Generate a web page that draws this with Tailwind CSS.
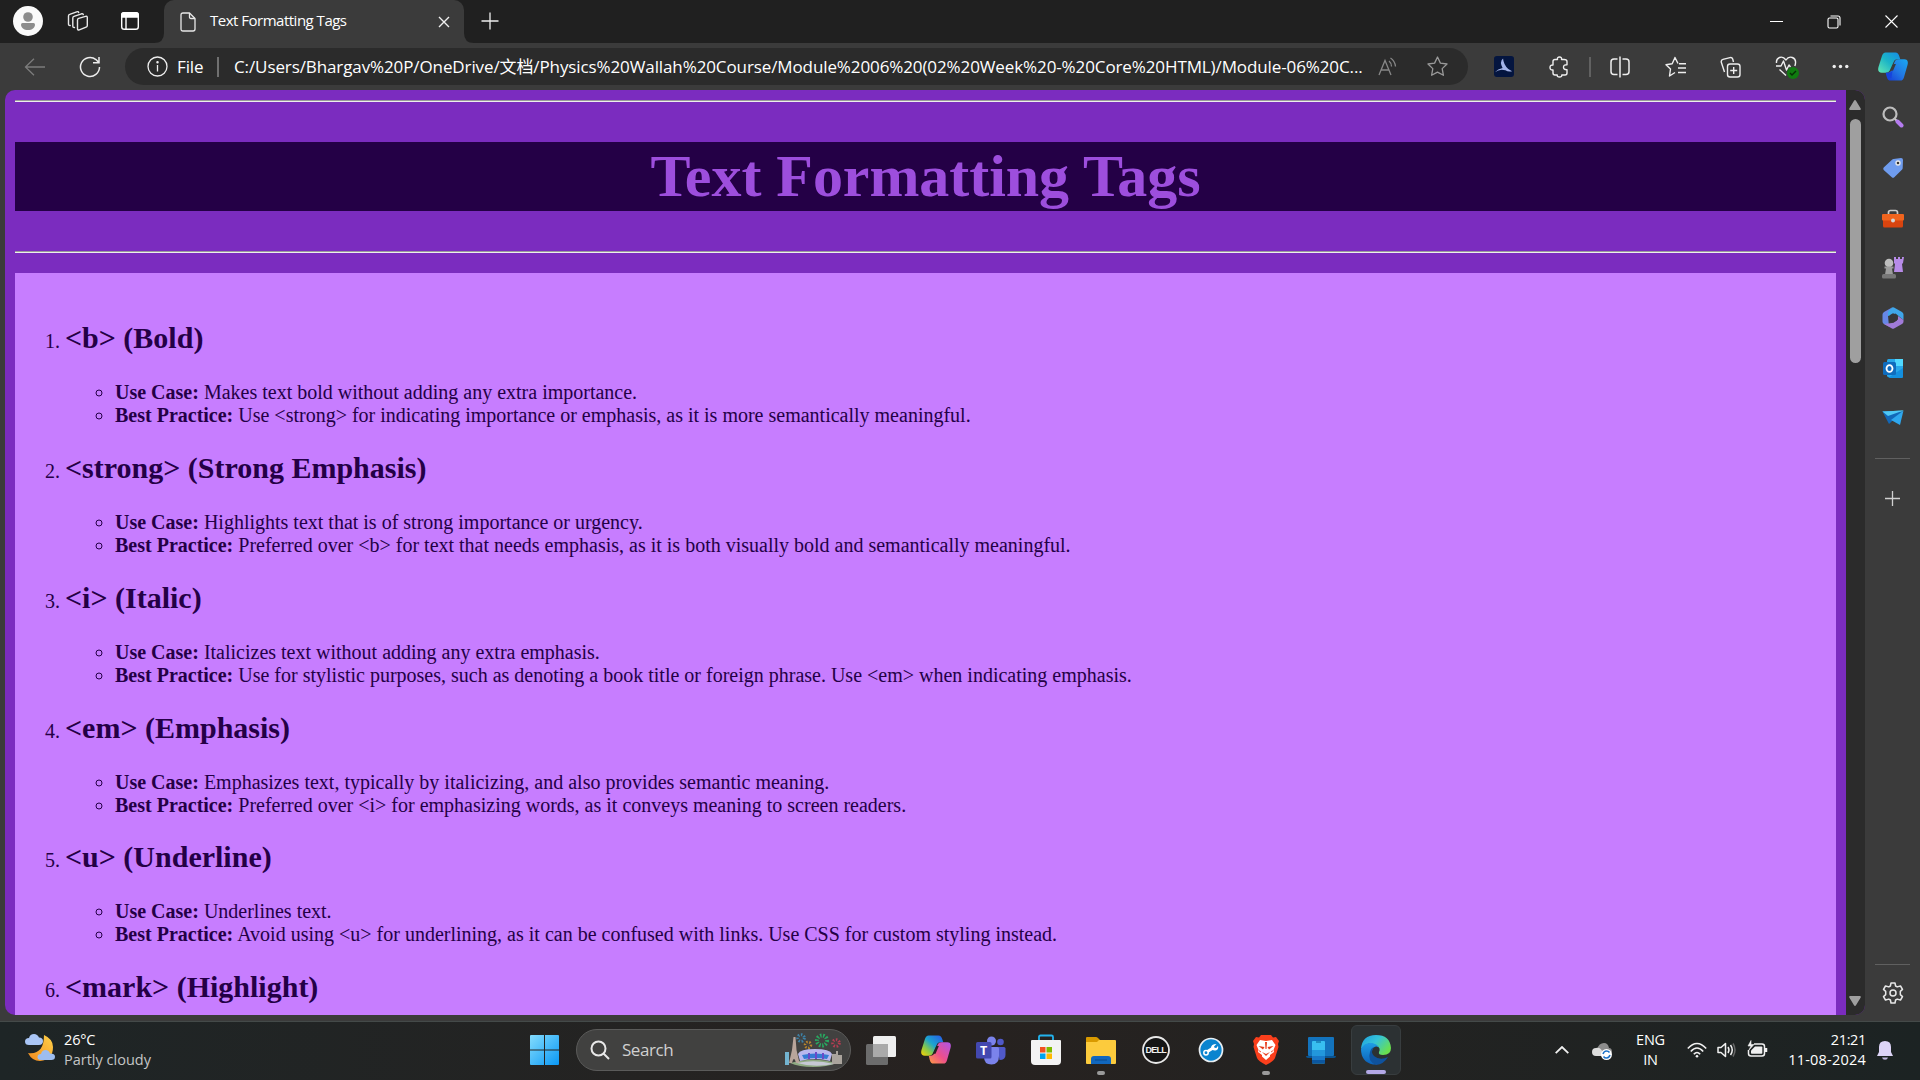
<!DOCTYPE html>
<html lang="en">
<head>
<meta charset="utf-8">
<title>Text Formatting Tags</title>
<script src="https://cdn.jsdelivr.net/npm/@tailwindcss/browser@4"></script>
</head>
<body class="w-[1920px] h-[1080px] overflow-hidden bg-[#3b3b3b] text-white font-['Open_Sans','Noto_Sans_CJK_SC',sans-serif] flex flex-col">

<!-- Tab strip -->
<header class="h-[43px] shrink-0 bg-[#202020] flex items-center">
  <svg class="ml-[13px] w-[30px] h-[30px] shrink-0 mb-[1px]" viewBox="0 0 30 30"><circle cx="15" cy="15" r="15" fill="#fafafa"/><circle cx="15" cy="11" r="4.8" fill="#8c8c8c"/><path d="M8 18.5q0-1.5 1.500-1.500h11q1.500 0 1.500 1.500c0 3.500-3 5.500-7 5.500s-7-2-7-5.500z" fill="#8c8c8c"/></svg>
  <svg class="ml-[24px] w-[22px] h-[22px] shrink-0 mb-px" viewBox="0 0 22 22" fill="none" stroke="#e8e8e8" stroke-width="1.400" stroke-linejoin="round" stroke-linecap="round"><path d="M10.500 10q0-1.200 1.200-1.600l6.800-2q1.800-.5 1.800 1.100v8q0 1.200-1.200 1.700l-6.800 2.700q-1.800.6-1.800-1.100z"/><path d="M7.500 17.500q-1.700.2-1.700-1.500V8q0-1.200 1.200-1.600l7.500-2.600q1.600-.4 1.800.8"/><path d="M3.200 15.500q-1.700.2-1.700-1.500V6q0-1.200 1.200-1.600l7-2.600q1.700-.5 2 .7"/></svg>
  <svg class="ml-[31px] w-[20px] h-[20px] shrink-0 mb-px" viewBox="0 0 20 20" fill="none" stroke="#fff" stroke-width="1.400"><rect x="1.700" y="1.700" width="16.600" height="16.600" rx="2.600"/><path d="M1.700 6V4.300q0-2.600 2.600-2.600h11.400q2.600 0 2.600 2.600V6z" fill="#fff"/><path d="M6 6v12"/></svg>
  <div class="relative ml-[24px] h-[43px] w-[300px] shrink-0 bg-[#3b3b3b] rounded-t-[10px] flex items-center">
    <svg class="absolute -left-[10px] bottom-0 w-[10px] h-[10px]" viewBox="0 0 10 10"><path d="M10 0v10H0Q10 10 10 0z" fill="#3b3b3b"/></svg>
    <svg class="absolute -right-[10px] bottom-0 w-[10px] h-[10px]" viewBox="0 0 10 10"><path d="M0 0v10h10Q0 10 0 0z" fill="#3b3b3b"/></svg>
    <svg class="ml-[16px] w-[16px] h-[20px] shrink-0" viewBox="0 0 16 20" fill="none" stroke="#e8e8e8" stroke-width="1.300" stroke-linejoin="round"><path d="M1 3q0-2 2-2h6.500L15 6.500V17q0 2-2 2H3q-2 0-2-2z"/><path d="M9.500 1v4q0 1.500 1.500 1.500h4"/></svg>
    <span class="ml-[14px] w-[228px] text-[15px] leading-5 tracking-[-0.5px] whitespace-nowrap mb-[4px]">Text Formatting Tags</span>
    <svg class="w-[12px] h-[12px] shrink-0" viewBox="0 0 12 12" stroke="#f0f0f0" stroke-width="1.400"><path d="M1 1l10 10M11 1L1 11"/></svg>
  </div>
  <svg class="ml-[17px] w-[18px] h-[18px] shrink-0 mb-[1px]" viewBox="0 0 18 18" stroke="#eee" stroke-width="1.300"><path d="M9 .5v17M.5 9h17"/></svg>
  <div class="ml-auto mr-[22px] flex items-center gap-[44px]">
    <svg class="w-[13px] h-[13px]" viewBox="0 0 13 13" stroke="#fff"><path d="M0 6.500h13"/></svg>
    <svg class="w-[14px] h-[14px]" viewBox="0 0 14 14" fill="none" stroke="#fff" stroke-width="1.100"><rect x="1" y="3" width="10" height="10" rx="1.500"/><path d="M3.500 1h7.500q2 0 2 2v7.500"/></svg>
    <svg class="w-[13px] h-[13px]" viewBox="0 0 13 13" stroke="#fff" stroke-width="1.100"><path d="M.5.5l12 12M12.500.5l-12 12"/></svg>
  </div>
</header>

<!-- Address bar -->
<div class="h-[47px] shrink-0 flex items-center">
  <svg class="ml-[24px] w-[21px] h-[18px] shrink-0" viewBox="0 0 21 18" fill="none" stroke="#7c7c7c" stroke-width="1.300"><path d="M21 9H1.500M10 .7L1.500 9l8.500 8.300"/></svg>
  <svg class="ml-[34px] w-[22px] h-[22px] shrink-0" viewBox="0 0 22 22" fill="none" stroke="#ececec" stroke-width="1.500"><path d="M20.500 11a9.500 9.500 0 1 1-3.500-7.400L19.800 6.500M20 1v5.700h-6"/></svg>
  <div class="ml-[24px] w-[1343px] h-[37px] shrink-0 rounded-full bg-[#2b2b2b] flex items-center whitespace-nowrap text-[17px] leading-6">
    <svg class="ml-[22px] w-[21px] h-[21px] shrink-0" viewBox="0 0 21 21" fill="none" stroke="#eee" stroke-width="1.300"><circle cx="10.500" cy="10.500" r="9.500"/><path d="M10.500 9v6.500"/><circle cx="10.500" cy="6.200" r=".6" fill="#eee"/></svg>
    <span class="ml-[9px] w-[40px] tracking-[-0.100px]">File</span>
    <span class="w-[2px] h-[20px] bg-[#707070]"></span>
    <span class="ml-[15px] w-[1144px] tracking-[-0.105px]">C:/Users/Bhargav%20P/OneDrive/文档/Physics%20Wallah%20Course/Module%2006%20(02%20Week%20-%20Core%20HTML)/Module-06%20C...</span>
    <svg class="w-[20px] h-[20px] shrink-0" viewBox="0 0 20 20" fill="none" stroke="#878787" stroke-width="1.300"><path d="M1 18L7 3.500l6 14.500M3 13h8M11 4q2.500 2 2.500 5.500M12.500 1q4.500 3 5 8.500"/></svg>
    <svg class="ml-[29px] w-[21px] h-[21px] shrink-0" viewBox="0 0 21 21" fill="none" stroke="#9a9a9a" stroke-width="1.300" stroke-linejoin="round"><path d="M10.500 1l2.900 6.100 6.600.9-4.800 4.600 1.200 6.700-5.900-3.200-5.900 3.200 1.200-6.700L1 8l6.600-.9z"/></svg>
  </div>
  <div class="ml-[26px] flex items-center">
    <svg class="w-[20px] h-[21px]" viewBox="0 0 21 22"><rect width="21" height="22" rx="3" fill="#04153f"/><path d="M1 17q3-3.500 8-4.500Q5.500 6 9.500 2.500 10 9 15 13.500l4 2.500q-4 1-7-1-6-2-11 2z" fill="#a3b3e8"/></svg>
    <svg class="ml-[35px] w-[22px] h-[22px]" viewBox="0 0 22 22" fill="none" stroke="#eee" stroke-width="1.400" stroke-linejoin="round"><path d="M4 5.500q0-2 2-2h2.500q-.5-2.500 2-2.500t2 2.500H15q3 0 3 2v3.200q-3.500-.2-3.500 2.500t3.500 2.500V17q0 2-2 2h-3.200q.2 2-2.300 2t-2.300-2H6q-2 0-2-2v-3Q1 14.200 1 11.500t3-2.500z"/></svg>
    <span class="ml-[18px] w-[2px] h-[20px] bg-[#616161]"></span>
    <svg class="ml-[19px] w-[20px] h-[22px]" viewBox="0 0 20 22" fill="none" stroke="#eee" stroke-width="1.500"><path d="M7.500 3H4Q1 3 1 6v9.500q0 3 3 3h3.500M12.500 3H16q3 0 3 3v9.500q0 3-3 3h-3.500M10 .5v21"/></svg>
    <svg class="ml-[35px] w-[21px] h-[22px]" viewBox="0 0 21 22" fill="none" stroke="#eee" stroke-width="1.400" stroke-linejoin="round"><path d="M13 7.500l-3-6-2.800 6.200L1 8.700 5.500 13l-1 7 5.500-3.500M14 7.700h7M13 12h8M13 16.500h8"/></svg>
    <svg class="ml-[34px] w-[21px] h-[22px]" viewBox="0 0 21 22" fill="none" stroke="#eee" stroke-width="1.400"><rect x="7.500" y="8" width="12.500" height="13" rx="2.500"/><path d="M13.700 11v7M10.200 14.500h7M4.500 16L1.300 6.300q-.5-2.300 1.700-3l7-1.700q2-.5 2.700 1.400L13.500 6"/></svg>
    <svg class="ml-[34px] w-[24px] h-[24px]" viewBox="0 0 24 24" fill="none" stroke="#eee" stroke-width="1.400" stroke-linejoin="round"><path d="M1.500 8Q1 4 4.500 2.500T11 5q2.500-4 6.300-2.500T20.500 8q0 1.500-.7 3M1 11h5l2.500-5 3 9 2.500-5 1.500 2M4.500 14.500l6.500 6"/><circle cx="18" cy="18" r="6" fill="#107c10" stroke="none"/><path d="M15 18l2 2 4-4" stroke="#062f06"/></svg>
    <svg class="ml-[33px] w-[17px] h-[5px]" viewBox="0 0 17 5" fill="#eee"><circle cx="2.200" cy="2.500" r="1.700"/><circle cx="8.500" cy="2.500" r="1.700"/><circle cx="14.800" cy="2.500" r="1.700"/></svg>
    <svg class="ml-[29px] w-[30px] h-[29px]" viewBox="0 0 31 29"><defs><linearGradient id="ca" x1="0" y1="1" x2="1" y2="0"><stop stop-color="#65e7b4"/><stop offset=".5" stop-color="#1bb4c7"/><stop offset="1" stop-color="#168be8"/></linearGradient><linearGradient id="cb" x1="0" y1="1" x2="1" y2="0"><stop stop-color="#1437d6"/><stop offset=".5" stop-color="#2279e4"/><stop offset="1" stop-color="#19a9f2"/></linearGradient></defs><path d="M8 0h10q3 0 4 4l1 3h-3q-3 0-4 3l-4 9q-1 2-4 2H4q-5 0-3.500-6L4 4Q5 0 8 0z" fill="url(#ca)"/><path d="M23 29H13q-3 0-4-4l-1-4q5 0 6-3l3-8q1-3 4-3h6q5 0 3.500 6L27 25q-1 4-4 4z" fill="url(#cb)"/><path d="M16 12l-3 7h2.500l3-7z" fill="#3b3b3b"/><path d="M8 21h2q4 0 5-3l-1 8q-4 2-6-5z" fill="#1744dd"/></svg>
  </div>
</div>

<!-- Page, scrollbar and sidebar -->
<div class="h-[931px] shrink-0 flex pl-[5px]">
  <main class="w-[1860px] h-[925px] shrink-0 rounded-[10px] overflow-hidden bg-[#7b2cbf] flex">
    <div class="w-[1841px] h-full px-[10px] pt-[10px] overflow-hidden font-['Liberation_Serif',serif] text-[#240046] text-[20px] leading-[23px]">
      <hr class="h-[2px] border-0 border-t border-t-[#9a9a9a] bg-[#eeeeee]">
      <h1 class="my-[40px] h-[69px] bg-[#240046] text-[#9d4edd] text-center text-[60px] leading-[69px] tracking-[-0.05px] font-bold">Text Formatting Tags</h1>
      <hr class="h-[2px] border-0 border-t border-t-[#9a9a9a] bg-[#eeeeee]">
      <ol class="mt-[20px] pt-[48px] pb-[50px] pl-[50px] bg-[#c77dff] list-decimal">
        <li class="mb-[24px]"><h2 class="text-[30px] leading-[34px] font-bold">&lt;b&gt; (Bold)</h2>
          <ul class="mt-[26px] pl-[50px] list-[circle]"><li><b>Use Case:</b> Makes text bold without adding any extra importance.</li><li><b>Best Practice:</b> Use &lt;strong&gt; for indicating importance or emphasis, as it is more semantically meaningful.</li></ul></li>
        <li class="mb-[24px]"><h2 class="text-[30px] leading-[34px] font-bold">&lt;strong&gt; (Strong Emphasis)</h2>
          <ul class="mt-[26px] pl-[50px] list-[circle]"><li><b>Use Case:</b> Highlights text that is of strong importance or urgency.</li><li><b>Best Practice:</b> Preferred over &lt;b&gt; for text that needs emphasis, as it is both visually bold and semantically meaningful.</li></ul></li>
        <li class="mb-[24px]"><h2 class="text-[30px] leading-[34px] font-bold">&lt;i&gt; (Italic)</h2>
          <ul class="mt-[26px] pl-[50px] list-[circle]"><li><b>Use Case:</b> Italicizes text without adding any extra emphasis.</li><li><b>Best Practice:</b> Use for stylistic purposes, such as denoting a book title or foreign phrase. Use &lt;em&gt; when indicating emphasis.</li></ul></li>
        <li class="mb-[23px]"><h2 class="text-[30px] leading-[34px] font-bold">&lt;em&gt; (Emphasis)</h2>
          <ul class="mt-[26px] pl-[50px] list-[circle]"><li><b>Use Case:</b> Emphasizes text, typically by italicizing, and also provides semantic meaning.</li><li><b>Best Practice:</b> Preferred over &lt;i&gt; for emphasizing words, as it conveys meaning to screen readers.</li></ul></li>
        <li class="mb-[24px]"><h2 class="text-[30px] leading-[34px] font-bold">&lt;u&gt; (Underline)</h2>
          <ul class="mt-[26px] pl-[50px] list-[circle]"><li><b>Use Case:</b> Underlines text.</li><li><b>Best Practice:</b> Avoid using &lt;u&gt; for underlining, as it can be confused with links. Use CSS for custom styling instead.</li></ul></li>
        <li><h2 class="text-[30px] leading-[34px] font-bold">&lt;mark&gt; (Highlight)</h2></li>
      </ol>
    </div>
    <div class="w-[19px] h-full bg-[#2b2b2b] flex flex-col items-center pr-px">
      <svg class="mt-[10px] w-[12px] h-[10px]" viewBox="0 0 12 10" fill="#9f9f9f"><path d="M6 0q.6 0 1 .7l4.700 7.800q.6 1.500-1 1.500H1.300q-1.600 0-1-1.500L5 .7Q5.400 0 6 0z"/></svg>
      <div class="mt-[9px] w-[11px] h-[244px] rounded-full bg-[#9f9f9f]"></div>
      <svg class="mt-auto mb-[9px] w-[12px] h-[10px] rotate-180" viewBox="0 0 12 10" fill="#9f9f9f"><path d="M6 0q.6 0 1 .7l4.700 7.800q.6 1.500-1 1.500H1.300q-1.600 0-1-1.500L5 .7Q5.400 0 6 0z"/></svg>
    </div>
  </main>

  <aside class="flex-1 flex flex-col items-center pt-[16px]">
    <svg class="w-[22px] h-[22px]" viewBox="0 0 22 22" fill="none"><circle cx="8" cy="8" r="6.500" stroke="#bdbdbd" stroke-width="2.200"/><path d="M13 13l2.500 2.500" stroke="#ccc" stroke-width="2"/><path d="M15.500 15.500l4 4" stroke="#b57cf0" stroke-width="4" stroke-linecap="round"/></svg>
    <svg class="mt-[29px] w-[22px] h-[22px]" viewBox="0 0 22 22"><path d="M11.500 2L19 1q2 0 2 2l-.3 8q0 1-.8 1.700l-7.600 7.600q-1.300 1-2.500 0L1.700 13q-1-1.200 0-2.500L10 2.700q.7-.6 1.500-.7z" fill="#6f9cee"/><circle cx="16" cy="6" r="2" fill="#333" stroke="#e8e8e8" stroke-width="1.400"/></svg>
    <svg class="mt-[30px] w-[22px] h-[20px]" viewBox="0 0 22 20"><path d="M6.500 5V3.500q0-2 2-2h5q2 0 2 2V5" fill="none" stroke="#ccc" stroke-width="1.700"/><path d="M1 10h20v7q0 1.500-1.500 1.500h-17Q1 18.500 1 17z" fill="#d9440f"/><rect y="5" width="22" height="6.500" rx="1" fill="#f0641e"/><circle cx="11" cy="11.500" r="2" fill="#d6d6d6"/></svg>
    <svg class="mt-[27px] w-[22px] h-[23px]" viewBox="0 0 22 23"><path d="M12 1h2v2h2V1h2v2h2V1h2l-1 6-1 1 1 8h-9l1-8-1-1z" fill="#b78be8"/><circle cx="7" cy="7" r="4.300" fill="#bdbdbd"/><path d="M2.500 10.500h9v2H10l1 6H3l1-6H2.500z" fill="#9c9c9c"/><rect y="18" width="14" height="4.500" rx="1.500" fill="#777"/></svg>
    <svg class="mt-[28px] w-[22px] h-[22px]" viewBox="0 0 22 22"><path d="M10 .5L2 5Q.5 6 .5 7.500v7Q.5 16 2 17l5 2.500L6 9z" fill="#6687e6"/><path d="M10 .5q1-.6 2 0l8 4.500q1.500 1 1.500 2.500V13l-8-6.500L6 9V5z" fill="#3fa6ea"/><path d="M21.500 13v1.500q0 1.500-1.500 2.500l-8 4.500q-1 .5-2 0l-8-4.500 8-1 6-3.500V9z" fill="#a17bd9"/><path d="M8 8l3-1.700L15 8v5.500L11 16l-4-2z" fill="#36363a"/></svg>
    <svg class="mt-[28px] w-[22px] h-[22px]" viewBox="0 0 22 22"><rect x="5" y="2" width="16" height="18" rx="1.500" fill="#28a8ea"/><path d="M13 2h8v7h-8z" fill="#50d9ff"/><path d="M21 11v9q0 1-1 1H6z" fill="#1490df"/><rect x="1" y="5" width="13" height="13" rx="1.500" fill="#0f6cbd"/><ellipse cx="7.500" cy="11.500" rx="3" ry="3.400" fill="none" stroke="#fff" stroke-width="1.800"/></svg>
    <svg class="mt-[31px] w-[22px] h-[17px]" viewBox="0 0 22 17"><path d="M.5 1.500L21.500.5 7 9z" fill="#45cafa"/><path d="M.5 1.500L20 1.500 7 14z" fill="#1268b8"/><path d="M21.500.5L18 15l-9-5z" fill="#2ea7ee"/><path d="M.5 1.500L21.500.5 6 6z" fill="#4fc9f5"/></svg>
    <span class="mt-[31px] w-[35px] h-px bg-[#606060]"></span>
    <svg class="mt-[32px] w-[15px] h-[15px]" viewBox="0 0 15 15" stroke="#d0d0d0" stroke-width="1.300"><path d="M7.500 0v15M0 7.500h15"/></svg>
    <span class="mt-auto w-[35px] h-px bg-[#606060]"></span>
    <svg class="mt-[17px] mb-[17px] w-[22px] h-[22px]" viewBox="0 0 22 22" fill="none" stroke="#e8e8e8" stroke-width="1.500" stroke-linejoin="round"><circle cx="11" cy="11" r="3"/><path d="M9 1h4l.6 3 1.600.9L18.500 4l2 3.400-2.200 2v3.200l2.200 2-2 3.400-3.300-.9-1.600.9L13 21H9l-.6-3-1.600-.9-3.300.9-2-3.400 2.200-2V9.400l-2.200-2 2-3.400 3.300.9L8.400 4z"/></svg>
  </aside>
</div>

<!-- Taskbar -->
<footer class="h-[59px] shrink-0 flex items-center pb-[2px] bg-linear-to-r from-[#1e2526] via-[#272220] to-[#1c2323] border-t border-[#444a49]">
  <svg class="ml-[25px] w-[30px] h-[30px] shrink-0 mb-[4px]" viewBox="0 0 30 30"><defs><linearGradient id="moon" x1="1" y1="0" x2="0" y2="1"><stop stop-color="#ffd24a"/><stop offset="1" stop-color="#f28a1e"/></linearGradient></defs><path d="M19 2q9 4 9 12 0 13-13 14Q7 28 3 20q16 2 16-18z" fill="url(#moon)"/><path d="M4 12q-4 0-4-3.500T4 5q1-4 5-4 3.500 0 5 3.500 4 0 4 3.700T14 12z" fill="#a9c5f5"/><path d="M16 27q-3.500 0-3.500-3t3.500-3q1-4 4.500-4t4.500 3.500q5 0 5 3.300T26 27z" fill="#9dbdf0"/></svg>
  <div class="ml-[9px] w-[466px] text-[14.500px] leading-[20px] mb-[1px]"><div class="tracking-[-0.150px]">26°C</div><div class="text-[#c4c6c6]">Partly cloudy</div></div>
  <svg class="w-[29px] h-[30px] shrink-0" viewBox="0 0 29 30"><defs><linearGradient id="win" x1="0" y1="0" x2="1" y2="1"><stop stop-color="#84dcfd"/><stop offset="1" stop-color="#0a98f5"/></linearGradient></defs><path d="M1 0h13v14.500H0V1q0-1 1-1zM15 0h13q1 0 1 1v13.500H15zM0 15.500h14V30H1q-1 0-1-1zM15 15.500h14V29q0 1-1 1H15z" fill="url(#win)"/></svg>
  <div class="ml-[17px] w-[275px] h-[42px] shrink-0 rounded-full bg-[#414140] border border-[#5b5b5a] flex items-center">
    <svg class="ml-[13px] w-[20px] h-[20px]" viewBox="0 0 20 20" fill="none" stroke="#e8e8e8" stroke-width="2"><circle cx="8.500" cy="8.500" r="7"/><path d="M13.500 13.500l5.500 5.500"/></svg>
    <span class="ml-[12px] w-[163px] text-[17px] leading-6 tracking-[-0.450px] text-[#d0d0d0]">Search</span>
    <svg class="w-[57px] h-[36px]" viewBox="0 0 57 36"><g fill="none" stroke-dasharray="1.500 1.500"><circle cx="16" cy="6" r="3.300" stroke="#3d82a8" stroke-width="3"/><circle cx="37" cy="8.500" r="5" stroke="#28a860" stroke-width="4"/><circle cx="23" cy="13" r="3" stroke="#b8862d" stroke-width="2.500"/><circle cx="51" cy="11" r="3.300" stroke="#b33d52" stroke-width="3"/></g><path d="M5 31q23-7 47 0-10 4-24 4T5 31z" fill="#8faa83"/><path d="M8.500 5h2l1 13 3 13H11q-1-4-2-4t-2 4H4l3-13z" fill="#b9a59b"/><path d="M0 20h4v13H0z" fill="#73b4d0"/><path d="M47 22h4v-3h2v4h4v9H47z" fill="#aaa49d"/><path d="M13 22q2-5 17-5t17 5l-2 7q-15-4-30 0z" fill="#b9b7ed"/><path d="M17 23q13-3 27 0l-2 4q-11-2-23 0z" fill="#347bd3"/><path d="M24 21v6M31 20v7M38 21v6" stroke="#6b49c8" stroke-width="2"/><path d="M12 31q18-4 37 1-20 4-37-1z" fill="#c6c8d5"/></svg>
  </div>
  <div class="ml-[2px] h-full flex items-center">
    <div class="w-[55px] flex justify-center"><svg class="w-[30px] h-[29px]" viewBox="0 0 30 29"><rect x="7" width="23" height="21" rx="1.500" fill="#efefef"/><rect y="8" width="22" height="21" rx="1.500" fill="#6c6c6c"/><path d="M7 8h15v13H7z" fill="#aaa"/></svg></div>
    <div class="w-[55px] flex justify-center"><svg class="w-[30px] h-[29px] mb-px" viewBox="0 0 31 29"><defs><linearGradient id="cp" x1="1" y1="0" x2="0" y2="1"><stop stop-color="#2857ea"/><stop offset=".45" stop-color="#1ca4d0"/><stop offset=".7" stop-color="#86c84b"/><stop offset="1" stop-color="#ffd000"/></linearGradient><linearGradient id="cq" x1="1" y1="0" x2="0" y2="1"><stop stop-color="#ae55e8"/><stop offset=".55" stop-color="#ed4f8c"/><stop offset="1" stop-color="#ff9b41"/></linearGradient></defs><path d="M8 0h10q3 0 4 4l1 3h-3q-3 0-4 3l-4 9q-1 2-4 2H4q-5 0-3.500-6L4 4Q5 0 8 0z" fill="url(#cp)"/><path d="M23 29H13q-3 0-4-4l-1-4q5 0 6-3l3-8q1-3 4-3h6q5 0 3.500 6L27 25q-1 4-4 4z" fill="url(#cq)"/><path d="M16 11l-3.500 8h2.500l3.500-8z" fill="#252322"/></svg></div>
    <div class="w-[55px] flex justify-center"><svg class="w-[30px] h-[29px]" viewBox="0 0 30 29"><circle cx="15.500" cy="5" r="4.500" fill="#7b83eb"/><circle cx="24.500" cy="6" r="3.300" fill="#5059c9"/><path d="M21 11h7q1.500 0 1.500 1.500V19q0 5-6 5z" fill="#5059c9"/><path d="M9 11h12.500q1.500 0 1.500 1.500V20q0 8.500-7.500 8.500T8 21z" fill="#7b83eb"/><rect y="6" width="15.500" height="16.500" rx="1.500" fill="#4348b0"/><text x="7.700" y="19" text-anchor="middle" font-size="12.500" font-weight="700" fill="#fff">T</text></svg></div>
    <div class="w-[55px] flex justify-center"><svg class="w-[30px] h-[32px]" viewBox="0 0 30 32"><path d="M8 7V3q0-1.500 1.500-1.500h11Q22 1.500 22 3v4" fill="none" stroke="#22b3ee" stroke-width="1.800"/><path d="M1 6h28q1 0 1 1v20q0 4-4 4H4q-4 0-4-4V7q0-1 1-1z" fill="#f3f3f3"/><path d="M9 13h5.500v5.500H9z" fill="#f25022"/><path d="M15.500 13H21v5.500h-5.500z" fill="#7fba00"/><path d="M9 19.500h5.500V25H9z" fill="#00a4ef"/><path d="M15.500 19.500H21V25h-5.500z" fill="#ffb900"/></svg></div>
    <div class="relative w-[55px] h-full flex items-center justify-center"><svg class="w-[30px] h-[27px]" viewBox="0 0 30 27"><path d="M0 1q0-1 1-1h9q1 0 2 1l2 2v5H0z" fill="#d99a00"/><path d="M0 5h11l2-2h16q1 0 1 1v22q0 1-1 1H1q-1 0-1-1z" fill="#fccb3d"/><path d="M5 27v-5q0-3 3-3h14q3 0 3 3v5z" fill="#1167be"/><path d="M9 23h12" stroke="#0a4a8b"/></svg><span class="absolute bottom-[3px] w-[8px] h-[4px] rounded-full bg-[#9a9a9a]"></span></div>
    <div class="w-[55px] flex justify-center"><svg class="w-[28px] h-[28px]" viewBox="0 0 28 28"><circle cx="14" cy="14" r="13" fill="#151515" stroke="#e8e8e8" stroke-width="1.800"/><text x="13.700" y="17.300" text-anchor="middle" font-size="9" font-weight="700" letter-spacing="-.8" fill="#f0f0f0" font-family="Liberation Sans">DELL</text></svg></div>
    <div class="w-[55px] flex justify-center"><svg class="w-[26px] h-[26px]" viewBox="0 0 26 26"><circle cx="13" cy="13" r="11.500" fill="#0a84cf" stroke="#e8eef2" stroke-width="1.700"/><path d="M9.500 14.500L15 11" stroke="#fff" stroke-width="2.800"/><circle cx="8" cy="15.700" r="2.200" fill="none" stroke="#fff" stroke-width="1.500"/><path d="M18.500 7l-2.500 2.500.8 1.400 1.900-.2 1.300-2q1 4-2.500 4.800-3.500.4-4.500-2.500Q13 7 18.500 7z" fill="#fff"/></svg></div>
    <div class="relative w-[55px] h-full flex items-center justify-center"><svg class="w-[26px] h-[30px]" viewBox="0 0 26 30"><path d="M8 0h10l2 2.500 3-.5 3 4-1 3 .5 3L22 23q-1 3-9 7-8-4-9-7L.5 12 1 9 0 6l3-4 3 .5z" fill="#fa3f1c"/><path d="M7 5l6 1 6-1 3.500 5-2 5 .5 2-4 3v1.500L13 25l-4-3.500V20l-4-3 .5-2-2-5z" fill="#fff"/><path d="M5.500 11l6 1-1.500 2.500zM20.500 11l-6 1 1.500 2.500zM12 7h2l-.5 7h-1zM9 17l4 2 4-2-4 4zM6 15l2 1.500-1 1zM20 15l-2 1.500 1 1z" fill="#e63b1b"/></svg><span class="absolute bottom-[3px] w-[8px] h-[4px] rounded-full bg-[#9a9a9a]"></span></div>
    <div class="w-[55px] flex justify-center"><svg class="w-[30px] h-[27px]" viewBox="0 0 30 27"><rect x="2" width="26" height="19" rx="1" fill="#1373bd"/><path d="M0 19h30q0 2-2 2H2q-2 0-2-2z" fill="#095390"/><rect x="6" y="4" width="13" height="22.500" rx="1" fill="#38bff0"/><path d="M6 13h13v6H6z" fill="#2297dc"/><path d="M6 19h13v4H6z" fill="#1878c8"/><path d="M6 23h13v3.500H6z" fill="#0b569f"/><path d="M10 5h5" stroke="#075c93"/></svg></div>
    <div class="relative ml-[3px] w-[50px] h-[50px] rounded-md bg-[#2c3133] border border-[#383d3f] flex items-center justify-center"><svg class="w-[30px] h-[30px]" viewBox="0 0 30 30"><defs><linearGradient id="eg" x1="0" y1="0" x2="1" y2=".6"><stop stop-color="#1c9fe0"/><stop offset=".5" stop-color="#35c3d8"/><stop offset="1" stop-color="#69e04f"/></linearGradient><linearGradient id="eb" x1="0" y1="0" x2="0" y2="1"><stop stop-color="#1f9de5"/><stop offset="1" stop-color="#0c60b8"/></linearGradient></defs><path d="M0 14Q1 0 15 0q14 0 15 13 0 7-8 7-5 0-4-3 2-4-2-6Q8 5 0 14z" fill="url(#eg)"/><path d="M0 14Q3 7 11 8q5 1 7 4-5-2-7 3-2 8 8 12-3 3-7 2.500Q0 27 0 14z" fill="url(#eb)"/><path d="M13 12q-4 5 0 9 6 5 14 1-4 7-12 8Q6 26 9 17q1-4 4-5z" fill="#0f529d"/></svg><span class="absolute bottom-0 w-[20px] h-[4px] rounded-full bg-[#b3a8e6]"></span></div>
  </div>
  <div class="ml-auto mr-[27px] flex items-center text-[14.500px] leading-[20px] tracking-[-0.350px]">
    <svg class="w-[14px] h-[8px]" viewBox="0 0 14 8" fill="none" stroke="#f0f0f0" stroke-width="1.800"><path d="M.7 7.200L7 1l6.300 6.200"/></svg>
    <svg class="ml-[23px] w-[20px] h-[17px] mt-[3px]" viewBox="0 0 20 17"><path d="M5 6q2-6 7-6 4 0 5 5 3 0 3 4l-8 4z" fill="#8c8c8c"/><path d="M4 13q-4 0-4-4t4-4q5-1 7 5v3z" fill="#ddd"/><circle cx="14.500" cy="11.500" r="5.500" fill="#fff"/><path d="M11 11q1-3 3.500-3 2 0 3 1.500M18 12q-1 3-3.500 3-2 0-3-1.500" fill="none" stroke="#1b72c8" stroke-width="1.500"/></svg>
    <div class="ml-[22px] w-[33px] text-center tracking-[-0.200px]"><div>ENG</div><div>IN</div></div>
    <svg class="ml-[20px] w-[20px] h-[16px]" viewBox="0 0 20 16" fill="none" stroke="#f0f0f0" stroke-width="1.600"><path d="M.8 6.500q9.200-10 18.400 0M3.800 9.500q6.200-7 12.400 0M6.800 12.300q3.200-3.600 6.400 0"/><circle cx="10" cy="14.200" r="1.300" fill="#f0f0f0" stroke="none"/></svg>
    <svg class="ml-[10px] w-[20px] h-[16px]" viewBox="0 0 20 16" fill="none" stroke="#f0f0f0" stroke-width="1.500" stroke-linejoin="round"><path d="M1 5.500h3L8.500 1.500v13L4 10.500H1zM11 5q2 3 0 6M13.500 3q3.500 5 0 10"/><path d="M16 1.500q4 6.500 0 13" stroke="#666"/></svg>
    <svg class="ml-[10px] w-[21px] h-[18px] mb-[3px]" viewBox="0 0 21 18" fill="none" stroke="#f0f0f0" stroke-width="1.500"><path d="M7 4h8q2.500 0 2.500 2.500v7Q17.500 16 15 16H4q-2.500 0-2.500-2.500V10"/><path d="M8 6.500h6.500q.8 0 .8.800V13q0 .8-.8.800H4.800Q4 13.800 4 13v-2.500z" fill="#f0f0f0" stroke="none"/><path d="M19 8v4" stroke-width="2.500"/><path d="M4 .5L1 6h3L2 10l5-5.500H4z" fill="#f0f0f0" stroke-width=".6"/></svg>
    <div class="ml-[15px] w-[83px] text-right whitespace-nowrap"><div>21:21</div><div class="tracking-[0.220px]">11-08-2024</div></div>
    <svg class="ml-[11px] w-[16px] h-[19px]" viewBox="0 0 16 19" fill="#ddd4f7"><path d="M8 0q6 0 6 6v5l2 4H0l2-4V6q0-6 6-6z"/><path d="M5 16.500h6q-.5 2.300-3 2.300t-3-2.300z" fill="#bfb6dc"/></svg>
  </div>
</footer>
</body>
</html>
